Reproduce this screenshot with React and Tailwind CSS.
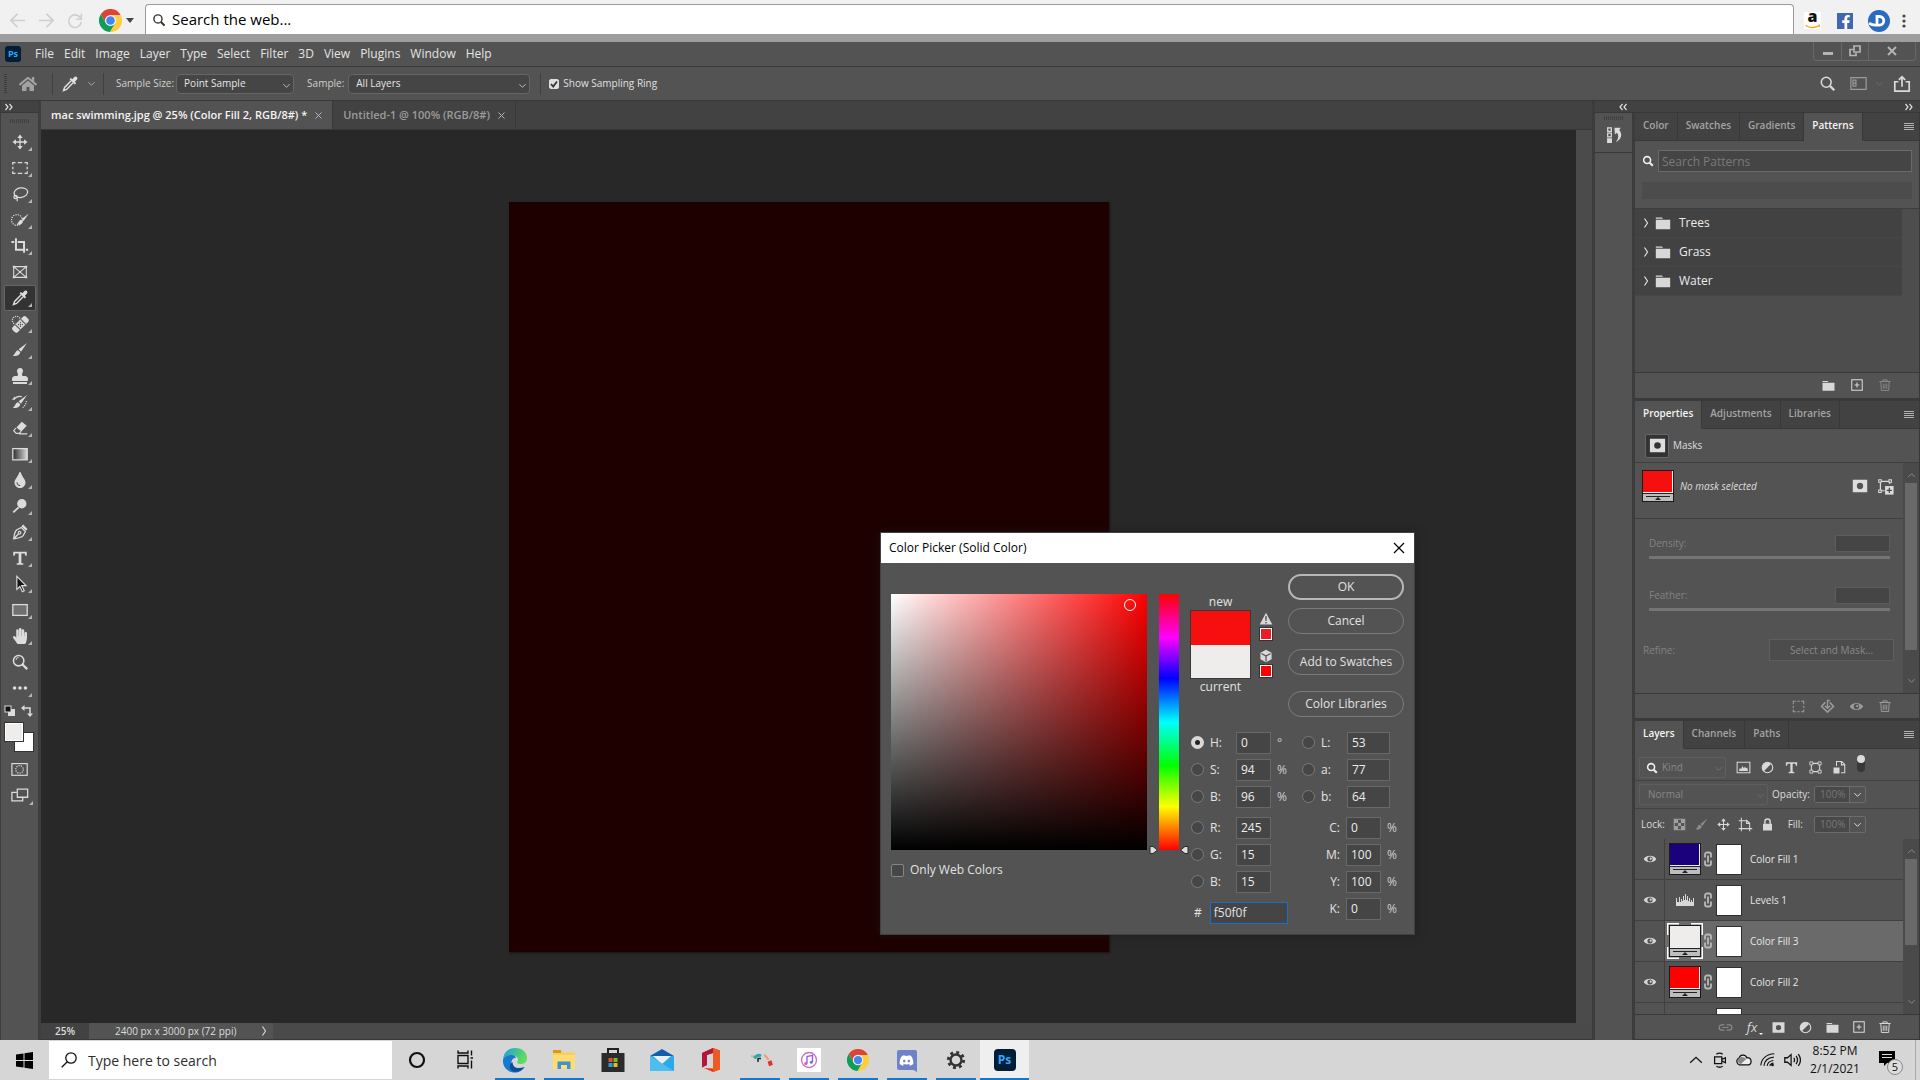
import React from "react";
import { FaFacebookF, FaDiscord, FaStamp, FaTint, FaHandPaper, FaHome } from "react-icons/fa";

/* ---------- shared icon pieces ---------- */

function Icon({ size = 20, box = 20, children, className = "" }) {
  return (
    <svg
      width={size}
      height={size}
      viewBox={`0 0 ${box} ${box}`}
      fill="none"
      stroke="currentColor"
      strokeWidth="1.4"
      aria-hidden="true"
      className={`block shrink-0 ${className}`}
    >
      {children}
    </svg>
  );
}

const solid = { fill: "currentColor", stroke: "none" };

function Chevron({ size = 10, dir = "down", className = "" }) {
  const d = {
    down: "M1.5 3.5L5 7l3.5-3.5",
    up: "M1.5 6.5L5 3l3.5 3.5",
    right: "M3.5 0.5L6.500 5l-3 4.5",
  }[dir];
  return (
    <Icon size={size} box={10} className={className}>
      <path d={d} strokeWidth="1.1" />
    </Icon>
  );
}

function DoubleArrow({ left }) {
  return (
    <Icon size={8} box={8}>
      <path d={left ? "M3.5 1L1 4l2.500 3M7.500 1L5 4l2.500 3" : "M.5 1L3 4 .5 7M4.500 1L7 4 4.500 7"} strokeWidth="1.2" />
    </Icon>
  );
}

const Eyedropper = () => (
  <>
    <path d="M11.300 6.500L4 13.800l-1.200 3.400 3.400-1.200L13.500 8.700" strokeWidth="1.600" />
    <path d="M9.500 4.600l1.500-1.400 1.600 1.400 2-2.200c2-1.900 4.900.8 3 3l-2.200 2 1.400 1.700-1.400 1.400z" {...solid} />
  </>
);
const Brush = () => (
  <path d="M17.800 2.300L8.500 9.200l2.600 2.700zM7.800 10.200c-2.800.3-2.800 3.900-5.800 6.300 4.200.8 8-.6 8.300-3.900z" {...solid} />
);
const Mover = () => (
  <>
    <path d="M10 4v12M4 10h12" />
    <path d="M10 1.700L13 5.500H7zM10 18.300l3-3.800H7zM1.700 10l3.800-3v6zM18.300 10l-3.800-3v6z" {...solid} />
  </>
);
const Magnifier = ({ w = 1.6 }) => (
  <>
    <circle cx="8.500" cy="8.500" r="5.800" strokeWidth={w} />
    <path d="M12.800 12.800L18 18" strokeWidth={w + 0.9} />
  </>
);
const FolderShape = () => <path d="M2 4h7l1 1.300H2zM2 6.300h16v10.700H2z" {...solid} />;
const PlusBox = () => (
  <>
    <rect x="2.500" y="2.500" width="15" height="15" strokeWidth="1.500" />
    <path d="M10 6.500v7M6.500 10h7" strokeWidth="1.500" />
  </>
);
const Trash = () => (
  <>
    <path d="M2 5h16M7 5V2.700h6V5M4 5.500l.8 12.300h10.400L16 5.500" />
    <path d="M7.500 8v7.500M10 8v7.500M12.500 8v7.500" strokeWidth="1.300" />
  </>
);
const MaskShape = () => (
  <path d="M2 3h16v14H2zM10 6.500a3.500 3.500 0 1 0 0 7 3.500 3.500 0 0 0 0-7z" fillRule="evenodd" {...solid} />
);
const Eye = () => (
  <path
    d="M1 10c3.500-6.300 14.500-6.300 18 0-3.500 6.300-14.500 6.300-18 0zM10 6.300a3.700 3.700 0 1 0 0 7.400 3.700 3.700 0 0 0 0-7.400zM11 8a1.500 1.500 0 1 1 0 3 1.500 1.500 0 0 1 0-3z"
    fillRule="evenodd"
    {...solid}
  />
);
const HalfCircle = () => (
  <>
    <circle cx="10" cy="10" r="7" strokeWidth="1.500" />
    <path d="M15 5A7 7 0 0 0 5 15z" {...solid} />
  </>
);
const Nodes = () => (
  <>
    <path d="M4.500 4.500h11v11h-11z" />
    <path d="M2.500 2.500h4v4h-4zM13.500 2.500h4v4h-4zM2.500 13.500h4v4h-4zM13.500 13.500h4v4h-4z" fill="#535353" strokeWidth="1.200" />
  </>
);
const TypeShape = () => (
  <path d="M2.500 3h15v4.500h-1.600L15.200 5H11.500v10.500l2.200.5v1.500H6.300V16l2.200-.5V5H4.800l-.7 2.500H2.500z" {...solid} />
);

function ChromeLogo({ size }) {
  return (
    <svg width={size} height={size} viewBox="0 0 24 24" aria-hidden="true" className="block shrink-0">
      <path fill="#db4437" d="M1.900 5.500A12 12 0 0 1 22.700 6.500H12A5.500 5.500 0 0 0 7.240 14.750z" />
      <path fill="#ffcd40" d="M22.700 6.500A12 12 0 0 1 11.400 24l5.360-9.250A5.500 5.500 0 0 0 12 6.500z" />
      <path fill="#0f9d58" d="M11.400 24A12 12 0 0 1 1.900 5.500l5.340 9.250a5.500 5.500 0 0 0 9.520 0z" />
      <circle cx="12" cy="12" r="5.600" fill="#f1f1f1" />
      <circle cx="12" cy="12" r="4.500" fill="#4285f4" />
    </svg>
  );
}

/* ---------- browser strip ---------- */

function BrowserBar() {
  return (
    <header className="flex shrink-0 items-end border-b-8 border-[#9e9e9e] bg-[#f1f1f1] pt-1">
      <div className="flex h-[30px] w-[145px] items-center gap-[10px] pt-[3px] pl-2 text-[#cfcfcf]">
        <button aria-label="Back"><Icon size={19}><path d="M18 10H3M10 3l-7 7 7 7" strokeWidth="1.800" /></Icon></button>
        <button aria-label="Forward"><Icon size={19}><path d="M2 10h15M10 3l7 7-7 7" strokeWidth="1.800" /></Icon></button>
        <button aria-label="Reload"><Icon size={18}><path d="M16 6.500A7 7 0 1 0 17 11M17 2v6h-6" strokeWidth="1.800" /></Icon></button>
        <button aria-label="Browser" className="ml-[5px] flex items-center gap-1">
          <ChromeLogo size={23} />
          <svg width="8" height="5" viewBox="0 0 8 5" aria-hidden="true"><path d="M0 0h8L4 5z" fill="#444" /></svg>
        </button>
      </div>
      <label className="flex h-[30px] flex-1 items-center gap-[6px] rounded-t-sm border border-b-0 border-[#9a9a9a] bg-white px-[6px]">
        <Icon size={14} className="text-[#333]"><Magnifier w={2} /></Icon>
        <input aria-label="Search the web" placeholder="Search the web..." className="min-w-0 flex-1 bg-transparent text-[15px] text-black outline-none placeholder:text-black" />
      </label>
      <div className="flex h-[30px] w-[126px] items-center pt-[3px] pl-[10px]">
        <button aria-label="Amazon" className="mr-4 flex h-[17px] w-[17px] flex-col items-center bg-white">
          <span className="-mt-1 text-[16px] leading-4 font-extrabold text-[#111]">a</span>
          <svg width="17" height="5" viewBox="0 0 17 5" aria-hidden="true" className="block">
            <path d="M1.500 1.500c4 2.500 9 2.500 13 .2M15.500 .5l-.6 2.500" stroke="#f90" strokeWidth="1.300" fill="none" />
          </svg>
        </button>
        <button aria-label="Facebook" className="mr-[15px] flex size-4 items-end justify-end bg-[#4267b2] text-white">
          <FaFacebookF size={14} />
        </button>
        <button aria-label="Account">
          <svg width="22" height="22" viewBox="0 0 22 22" aria-hidden="true">
            <circle cx="11" cy="11" r="11" fill="#2a6ac0" />
            <path d="M9 14V6.500h2.500a4.300 4.300 0 0 1 0 8.600H7.500c-3 0-4.500-.6-6.500-2" fill="none" stroke="#fff" strokeWidth="2.800" />
          </svg>
        </button>
        <button aria-label="More" className="ml-3">
          <svg width="4" height="14" viewBox="0 0 4 14" fill="#444" aria-hidden="true"><circle cx="2" cy="2" r="1.600" /><circle cx="2" cy="7" r="1.600" /><circle cx="2" cy="12" r="1.600" /></svg>
        </button>
      </div>
    </header>
  );
}

/* ---------- menu and options ---------- */

function PsLogo({ className }) {
  return <span className={`flex items-center justify-center bg-[#001e36] font-bold text-[#31a8ff] ${className}`}>Ps</span>;
}

const MENUS = ["File", "Edit", "Image", "Layer", "Type", "Select", "Filter", "3D", "View", "Plugins", "Window", "Help"];

function MenuBar() {
  return (
    <nav className="flex h-[25px] shrink-0 items-center border-b border-[#383838] pl-[5px] text-[12px]">
      <PsLogo className="mr-[9px] size-4 rounded-[3px] text-[9px]" />
      {MENUS.map((m) => (
        <button key={m} className="px-[5px]">{m}</button>
      ))}
      <div className="mr-1 ml-auto flex h-[19px] self-start rounded-b-sm border border-t-0 border-[#686868] text-[#b4b4b4]">
        <button aria-label="Minimize" className="flex w-7 items-center justify-center border-r border-[#686868]">
          <span className="mt-1 h-[3px] w-[10px] bg-[#b4b4b4]" />
        </button>
        <button aria-label="Restore" className="flex w-[27px] items-center justify-center border-r border-[#686868]">
          <Icon size={12} box={12}><path d="M5 1h6v6H5zM4 4.500H1v6h6V8" strokeWidth="1.700" /></Icon>
        </button>
        <button aria-label="Close" className="flex w-[46px] items-center justify-center">
          <Icon size={10} box={10}><path d="M1 1l8 8M9 1L1 9" strokeWidth="2" /></Icon>
        </button>
      </div>
    </nav>
  );
}

function OptionSelect({ id, value, className }) {
  return (
    <span className={`relative flex ${className}`}>
      <select id={id} defaultValue={value} className="h-5 w-full appearance-none rounded-sm border border-[#666] bg-[#454545] pr-5 pl-[7px] text-[10px] text-[#e6e6e6]">
        <option>{value}</option>
      </select>
      <Chevron size={9} className="pointer-events-none absolute top-[7px] right-[3px] text-[#bbb]" />
    </span>
  );
}

function OptionsBar() {
  return (
    <div className="flex h-[34px] shrink-0 items-center border-b border-[#383838] text-[10px] text-[#d0d0d0]">
      <span className="ml-1 h-5 w-[3px] bg-[repeating-linear-gradient(#3c3c3c_0_1px,transparent_1px_2px)]" />
      <button aria-label="Home" className="ml-3 text-[#a2a2a2]"><FaHome size={18} /></button>
      <span className="mr-2 ml-[15px] h-[22px] w-px bg-[#404040]" />
      <button aria-label="Eyedropper tool" className="flex items-center gap-2 text-[#e0e0e0]">
        <Icon size={18}><Eyedropper /></Icon>
        <Chevron size={9} className="text-[#aaa]" />
      </button>
      <span className="mr-3 ml-[7px] h-[22px] w-px bg-[#404040]" />
      <label htmlFor="sample-size" className="mr-[2px] whitespace-nowrap">Sample Size:</label>
      <OptionSelect id="sample-size" value="Point Sample" className="w-[118px]" />
      <label htmlFor="sample-layers" className="mr-1 ml-[13px] whitespace-nowrap">Sample:</label>
      <OptionSelect id="sample-layers" value="All Layers" className="w-[182px]" />
      <span className="mr-2 ml-[10px] h-[22px] w-px bg-[#404040]" />
      <label className="flex items-center gap-1 text-[#e0e0e0]">
        <CheckInput defaultChecked className="size-[10px]" />
        Show Sampling Ring
      </label>
      <div className="ml-auto flex items-center pr-[9px] text-[#dadada]">
        <button aria-label="Search"><Icon size={17}><Magnifier w={1.8} /></Icon></button>
        <button aria-label="Workspace" className="ml-[14px] flex items-center gap-2 text-[#9a9a9a]">
          <Icon size={17}><path d="M1 3h18v14H1z" /><path d="M3.500 6h3.500v7H3.500zM3.500 9.500H7" /></Icon>
          <Chevron size={9} className="text-[#6a6a6a]" />
        </button>
        <button aria-label="Share" className="ml-[9px]"><Icon size={18}><path d="M6 7.500H2V18h16V7.500h-4M10 13V3M6.500 5.500L10 2l3.500 3.500" strokeWidth="1.900" /></Icon></button>
      </div>
    </div>
  );
}

function CheckInput({ className = "", ...props }) {
  return (
    <span className={`relative flex ${className}`}>
      <input type="checkbox" {...props} className="peer size-full appearance-none rounded-xs border border-[#858585] bg-[#464646] checked:border-[#dedede] checked:bg-[#dedede]" />
      <svg viewBox="0 0 10 10" className="pointer-events-none absolute inset-0 hidden peer-checked:block" aria-hidden="true">
        <path d="M2 5l2.200 2.500L8 2.500" fill="none" stroke="#333" strokeWidth="1.800" />
      </svg>
    </span>
  );
}

/* ---------- tools ---------- */

const TOOLS = [
  ["Move", <Mover />],
  ["Marquee", <path d="M2 6.500V4h3M7.500 4h5M15 4h3v2.500M18 8.500v3M18 13.500V16h-3M12.500 16h-5M5 16H2v-2.500M2 11.500v-3" />],
  ["Lasso", <><ellipse cx="11" cy="8.500" rx="7.600" ry="5.300" transform="rotate(-10 11 8.500)" /><circle cx="5" cy="13.200" r="1.800" /><path d="M6.500 14.500c.8 1.200.8 2.200.2 3.500" /></>],
  ["Quick selection", <><circle cx="6.500" cy="10" r="6" strokeDasharray="1.300 1.300" /><g transform="translate(4.500 1) scale(.85)"><Brush /></g></>],
  ["Crop", <path d="M5.500 1.500v12.700h9M.5 5.500h3M7.500 5.500H14.500v12M16.500 14.200h2.500" strokeWidth="2.200" />],
  ["Frame", <><path d="M3 4h14v12H3zM3 4l14 12M17 4L3 16" strokeWidth="1.200" /><path d="M2 3h2v2H2zM16 3h2v2h-2zM2 15h2v2H2zM16 15h2v2h-2z" {...solid} /></>],
  ["Eyedropper", <Eyedropper />],
  ["Healing brush", <><circle cx="6" cy="6" r="4.500" strokeDasharray="1.200 1.200" /><g transform="rotate(-45 10.500 10.500)"><rect x="0" y="6.500" width="21" height="8" rx="2.500" {...solid} /><path d="M6.300 6.500v8M14.700 6.500v8" stroke="#535353" strokeWidth="1.200" /><path d="M9 9h.1M12 9h.1M9 12h.1M12 12h.1M10.500 10.500h.1" stroke="#535353" strokeWidth="1.500" strokeLinecap="round" /></g></>],
  ["Brush", <Brush />],
  ["Clone stamp", null, FaStamp],
  ["History brush", <><Brush /><path d="M4 6c3-2.500 6-2.500 8-2" /><path d="M1 7.500l3.500-4v4z" {...solid} /><path d="M17 9c0 3-2 6-4.500 7.500" strokeDasharray="1.200 1.200" /></>],
  ["Eraser", <><path d="M12 3l5.500 4.500-6 6.500L6 9.500z" {...solid} /><path d="M5.500 10L3 13l2.800 3h3.400l2-2.200M9 16.500h9" strokeWidth="1.300" /></>],
  ["Gradient", <><defs><linearGradient id="tool-gradient"><stop stopColor="#2c2c2c" /><stop offset="1" stopColor="#d8d8d8" /></linearGradient></defs><rect x="2" y="4" width="16" height="12.500" fill="url(#tool-gradient)" /></>],
  ["Blur", null, FaTint],
  ["Dodge", <><circle cx="12" cy="7.500" r="5.200" {...solid} /><path d="M8.500 11.500L2.500 17" strokeWidth="2" /></>],
  ["Pen", <><path d="M3 17.500c.5-4.500 1-8 3.500-10l5-2.500 4.500 4.500-2.500 4.500c-2 2.500-6 3-10.500 3.500zM3.500 17l5-5" /><circle cx="9.500" cy="10.800" r="1.500" strokeWidth="1.200" /><path d="M11.500 3.500l2-1.700 4.800 4.800-1.700 2z" {...solid} /></>],
  ["Type", <TypeShape />],
  ["Path selection", <path d="M6.500 1.500v14.500l3.300-3.200 2.900 5.700 2-1-2.800-5.700h4.800z" fill="#151515" strokeWidth="1.300" />],
  ["Rectangle", <rect x="2" y="4" width="16" height="12" fill="#707070" />],
  ["Hand", null, FaHandPaper],
  ["Zoom", <><Magnifier w={1.7} /><path d="M5.500 8a3 3 0 0 1 3-3" strokeWidth="1" /></>],
  ["More tools", <path d="M2 10a2 2 0 1 0 4 0 2 2 0 1 0-4 0M8 10a2 2 0 1 0 4 0 2 2 0 1 0-4 0M14 10a2 2 0 1 0 4 0 2 2 0 1 0-4 0" {...solid} />],
];
const NO_FLYOUT = ["Frame", "Zoom"];

function Flyout() {
  return (
    <svg width="4" height="4" viewBox="0 0 4 4" className="absolute right-[3px] bottom-[3px]" aria-hidden="true"><path d="M4 0v4H0z" fill="#b5b5b5" /></svg>
  );
}

function Toolbar() {
  return (
    <aside className="flex w-[41px] shrink-0 flex-col border-r-3 border-l border-[#3e3e3e]">
      <div className="flex h-3 items-center border-b border-[#383838] bg-[#424242] pl-1 text-[#ddd]"><DoubleArrow /></div>
      <div className="flex h-4 items-center justify-center"><span className="h-1 w-5 bg-[repeating-linear-gradient(90deg,#404040_0_1px,transparent_1px_2px)]" /></div>
      <div className="flex flex-col pl-[3px] text-[#dcdcdc]">
        {TOOLS.map(([name, art, Pack]) => (
          <button
            key={name}
            aria-label={name}
            className={`relative flex h-[26px] w-8 items-center justify-center rounded-xs border ${name === "Eyedropper" ? "border-[#666] bg-[#333]" : "border-transparent"}`}
          >
            {Pack ? <Pack size={16} /> : <Icon size={18}>{art}</Icon>}
            {!NO_FLYOUT.includes(name) && <Flyout />}
          </button>
        ))}
        <div className="flex h-5 items-center justify-between pr-[5px]">
          <button aria-label="Default colors"><Icon size={12} box={12}><path d="M4 4h7v7H4z" {...solid} /><rect x="1" y="1" width="6" height="6" fill="#111" strokeWidth="1" /></Icon></button>
          <button aria-label="Swap colors"><Icon size={12} box={12}><path d="M3 3h6v6" strokeWidth="1.500" /><path d="M0 3l3.500-3v6zM9 12L6 8.500h6z" {...solid} /></Icon></button>
        </div>
        <div className="relative mt-px h-[30px] w-[30px]">
          <button aria-label="Background color" className="absolute right-0 bottom-0 size-5 border border-[#333] bg-white" />
          <button aria-label="Foreground color" className="absolute top-0 left-0 size-5 border border-[#333] bg-[#efecec] outline-1 -outline-offset-2 outline-white" />
        </div>
        <button aria-label="Quick mask" className="mt-1 flex h-[26px] w-8 items-center justify-center">
          <Icon size={18}><rect x="1" y="4" width="17" height="13" strokeWidth="1.300" /><circle cx="9.500" cy="10.500" r="4.200" strokeDasharray="1.300 1.300" /></Icon>
        </button>
        <button aria-label="Screen mode" className="relative flex h-[26px] w-8 items-center justify-center">
          <Icon size={18}><path d="M7 3.500h11.500v9H7z" /><path d="M6.500 7H1v9.500h12v-3.500" /></Icon>
          <Flyout />
        </button>
      </div>
    </aside>
  );
}

/* ---------- document area ---------- */

function DocTab({ active, children }) {
  return (
    <div className={`flex items-center gap-2 border-r border-[#383838] px-[10px] text-[11px] font-semibold ${active ? "bg-[#535353] text-[#f4f4f4]" : "text-[#9c9c9c]"}`}>
      <button className="whitespace-nowrap">{children}</button>
      <button aria-label="Close tab" className="text-[#b5b5b5]"><Icon size={7} box={7}><path d="M.5.5l6 6M6.500.5l-6 6" strokeWidth="1" /></Icon></button>
    </div>
  );
}

function Workspace() {
  return (
    <main className="flex min-w-0 flex-1 flex-col">
      <div className="flex h-[29px] shrink-0 border-b border-[#383838] bg-[#424242]">
        <DocTab active>mac swimming.jpg @ 25% (Color Fill 2, RGB/8#) *</DocTab>
        <DocTab>Untitled-1 @ 100% (RGB/8#)</DocTab>
      </div>
      <div className="flex min-h-0 flex-1">
        <div className="flex min-w-0 flex-1 items-center justify-center bg-[#282828]">
          <div className="h-[750px] w-[600px] bg-[#1e0000] shadow-[1px_1px_2px_#151515]" />
        </div>
        <div className="w-4 bg-[#4b4b4b]" />
      </div>
      <div className="flex h-[17px] shrink-0 items-center border-b border-[#383838] bg-[#4a4a4a] text-[10px] text-[#dcdcdc]">
        <span className="flex h-full w-12 items-center bg-[#424242] pl-[14px] font-semibold">25%</span>
        <button className="flex h-full w-[184px] items-center justify-between bg-[#535353] pr-1 pl-[26px]">
          2400 px x 3000 px (72 ppi)<Chevron size={10} dir="right" />
        </button>
      </div>
    </main>
  );
}

/* ---------- panels ---------- */

function PanelTabs({ tabs, active }) {
  return (
    <div className="flex h-7 shrink-0 items-stretch bg-[#424242] text-[10px] font-semibold">
      {tabs.map((t) => (
        <button
          key={t}
          className={`border-r border-b border-r-[#383838] px-2 pb-[2px] ${t === active ? "border-b-transparent bg-[#535353] text-[#f4f4f4]" : "border-b-[#383838] text-[#a4a4a4]"}`}
        >
          {t}
        </button>
      ))}
      <div className="flex flex-1 items-center justify-end border-b border-[#383838] pr-[5px] text-[#b0b0b0]">
        <button aria-label={`${active} panel menu`}><Icon size={10} box={10}><path d="M0 1.500h10M0 3.500h10M0 5.500h10M0 7.500h10" strokeWidth="1" shapeRendering="crispEdges" /></Icon></button>
      </div>
    </div>
  );
}

function IconButton({ label, size = 15, className = "", children }) {
  return (
    <button aria-label={label} className={`relative ${className}`}>
      <Icon size={size}>{children}</Icon>
    </button>
  );
}

function PatternsPanel() {
  return (
    <section className="flex shrink-0 flex-col border-b-3 border-[#3a3a3a]">
      <PanelTabs tabs={["Color", "Swatches", "Gradients", "Patterns"]} active="Patterns" />
      <div className="flex flex-col gap-[10px] border-b border-[#3e3e3e] px-[7px] py-[9px]">
        <label className="flex items-center gap-1 text-[#eee]">
          <Icon size={12}><Magnifier w={2.6} /></Icon>
          <input placeholder="Search Patterns" aria-label="Search patterns" className="h-[22px] min-w-0 flex-1 border border-[#6a6a6a] bg-[#454545] px-[3px] text-[12px] outline-none placeholder:text-[#7a7a7a]" />
        </label>
        <div className="h-[17px] bg-[#4c4c4c]" />
      </div>
      <div className="h-[163px] bg-[#4d4d4d] pr-[17px] text-[12px] text-[#ececec]">
        {["Trees", "Grass", "Water"].map((n) => (
          <button key={n} className="flex h-[29px] w-full items-center border-b border-[#474747] bg-[#424242] pl-[6px]">
            <Chevron size={10} dir="right" />
            <Icon size={18} className="mx-[3px] text-[#d8d8d8]"><FolderShape /></Icon>
            <span className="pl-1">{n}</span>
          </button>
        ))}
      </div>
      <div className="flex h-[26px] items-center justify-end gap-[14px] border-t border-[#383838] pr-[27px] pb-px text-[#d8d8d8]">
        <IconButton label="New group"><FolderShape /></IconButton>
        <IconButton label="New pattern" size={14}><PlusBox /></IconButton>
        <IconButton label="Delete pattern" size={14} className="text-[#888]"><Trash /></IconButton>
      </div>
    </section>
  );
}

function ScrollBar({ thumb }) {
  return (
    <div className="flex w-4 shrink-0 flex-col items-center bg-[#4a4a4a] py-1 text-[#8a8a8a]">
      <Chevron size={9} dir="up" className="mt-1 mb-[3px]" />
      <div className={`w-3 bg-[#696969] ${thumb}`} />
      <Chevron size={9} className="mt-auto mb-1" />
    </div>
  );
}

function FillThumb({ color }) {
  return (
    <span className="flex size-8 shrink-0 flex-col border border-[#1a1a1a] bg-[#bdbdbd]">
      <span className={`h-[22px] border-r border-b border-[#eee] ${color}`} />
      <svg viewBox="0 0 30 8" width="30" height="8" aria-hidden="true"><path d="M0 .5h30M3 3.500h24" stroke="#222" strokeWidth="1" /><path d="M15 4l3 3h-6z" fill="#222" /></svg>
    </span>
  );
}

function MaskSlider({ id, label }) {
  return (
    <div className="flex flex-col gap-1">
      <div className="flex items-center justify-between">
        <label htmlFor={id} className="text-[#828282]">{label}</label>
        <input disabled aria-label={`${label} value`} className="h-[17px] w-[55px] border border-[#5c5c5c] bg-[#454545]" />
      </div>
      <input id={id} type="range" disabled className="h-[3px] appearance-none bg-[#757575] [&::-webkit-slider-thumb]:size-0 [&::-webkit-slider-thumb]:appearance-none" />
    </div>
  );
}

function PropertiesPanel() {
  return (
    <section className="flex shrink-0 flex-col border-b-3 border-[#3a3a3a]">
      <PanelTabs tabs={["Properties", "Adjustments", "Libraries"]} active="Properties" />
      <div className="flex h-[34px] items-center gap-1 border-b border-[#3e3e3e] pl-[10px] text-[10px] text-[#ddd]">
        <button aria-label="Masks" className="flex size-6 items-center justify-center rounded-xs border border-[#666] bg-[#333]">
          <Icon size={19}><MaskShape /></Icon>
        </button>
        Masks
      </div>
      <div className="flex text-[10px]">
        <div className="min-w-0 flex-1">
          <div className="flex h-14 items-start border-b border-[#3e3e3e] pt-[7px] pr-[9px] pl-[7px] text-[#ddd]">
            <FillThumb color="bg-[#f50f0f]" />
            <span className="mt-[9px] ml-[6px] italic">No mask selected</span>
            <IconButton label="Add pixel mask" size={18} className="mt-[7px] mr-2 ml-auto"><MaskShape /></IconButton>
            <IconButton label="Add vector mask" size={17} className="mt-2">
              <path d="M15 7V4M4 4v11h5M4 4h11" /><path d="M2 2h3v3H2zM14 2h3v3h-3zM2 14h3v3H2z" strokeWidth="1.200" fill="#535353" />
              <path d="M9.500 9.500h10v10h-10z" {...solid} /><path d="M14.500 11.500v6M11.500 14.500h6" stroke="#444" />
            </IconButton>
          </div>
          <div className="flex h-[174px] flex-col gap-7 pt-4 pr-[13px] pl-[14px]">
            <MaskSlider id="density" label="Density:" />
            <MaskSlider id="feather" label="Feather:" />
            <div className="-mr-1 -ml-[6px] flex items-center justify-between">
              <span className="text-[#828282]">Refine:</span>
              <button disabled className="h-[22px] w-[125px] border border-[#5e5e5e] bg-[#4c4c4c] text-[#8a8a8a]">Select and Mask...</button>
            </div>
          </div>
        </div>
        <ScrollBar thumb="h-[167px]" />
      </div>
      <div className="flex h-[25px] items-center justify-end gap-[14px] border-t border-[#383838] pr-[27px] text-[#9c9c9c]">
        <IconButton label="Load selection"><path d="M3 7V3h3.500M8.500 3h3M13.500 3H17v4M17 9v3M17 14v3h-3.500M11.500 17h-3M6.500 17H3v-3M3 12V9" /></IconButton>
        <IconButton label="Apply mask"><path d="M7 4.500L2 10l8 7.500L18 10l-5-5.500" strokeWidth="2" /><path d="M13 2h-3v10M6.500 9L10 12.500 13.500 9" strokeWidth="1.800" /></IconButton>
        <IconButton label="Toggle mask"><Eye /></IconButton>
        <IconButton label="Delete mask" size={14}><Trash /></IconButton>
      </div>
    </section>
  );
}

const LAYERS = [
  { name: "Color Fill 1", color: "bg-[#1b027c]" },
  { name: "Levels 1" },
  { name: "Color Fill 3", color: "bg-[#efecec]", selected: true },
  { name: "Color Fill 2", color: "bg-[#fe0000]" },
];

function LinkIcon() {
  return (
    <svg width="10" height="16" viewBox="0 0 10 16" fill="none" stroke="#b8b8b8" strokeWidth="1.800" aria-hidden="true">
      <path d="M2 6.500V3.500a2 2 0 0 1 2-2h2a2 2 0 0 1 2 2v3M2 9.500v3a2 2 0 0 0 2 2h2a2 2 0 0 0 2-2v-3M5 4.500v7" />
    </svg>
  );
}

function LayerRow({ name, color, selected }) {
  return (
    <li className="flex h-[41px] border-b border-[#404040]">
      <button aria-label={`Toggle ${name}`} className="flex w-[30px] items-center justify-center border-r border-[#404040] text-[#d8d8d8]"><Icon size={14}><Eye /></Icon></button>
      <div className={`flex min-w-0 flex-1 items-center pl-1 ${selected ? "bg-[#6a6a6a]" : ""}`}>
        <span className="relative flex w-8 justify-center">
          {color ? <FillThumb color={color} /> : (
            <svg width="18" height="12" viewBox="0 0 18 12" fill="#d8d8d8" aria-hidden="true"><path d="M0 12V4h1v4h2V3h1v5h1V5h1v2h1V2h1v4h1V0h1v6h1V2h1v5h1V4h1v4h1V6h1v2h1V4h1v8z" /></svg>
          )}
          {selected && (
            <svg width="36" height="36" viewBox="0 0 36 36" className="absolute -top-[2px] -left-[2px]" fill="none" stroke="#fff" strokeWidth="1.500" aria-hidden="true"><path d="M.7 12V.7H12M24 .7h11.300V12M35.300 24v11.300H24M12 35.300H.7V24" /></svg>
          )}
        </span>
        <span className="mx-[2px]"><LinkIcon /></span>
        <span className="ml-px h-[31px] w-[26px] border border-[#303030] bg-white" />
        <span className="pl-2 text-[10px] text-[#e6e6e6]">{name}</span>
      </div>
    </li>
  );
}

function PercentField({ id, label }) {
  return (
    <>
      <label htmlFor={id} className="mr-1 ml-auto text-[#dcdcdc]">{label}</label>
      <span className="mr-[53px] flex h-[17px] rounded-xs border border-[#6c6c6c]">
        <input id={id} disabled defaultValue="100%" className="w-[35px] border-r border-[#6c6c6c] bg-[#484848] pl-[5px] text-[#777]" />
        <button aria-label={`${label} slider`} className="flex w-[15px] items-center justify-center text-[#ddd]"><Chevron size={9} /></button>
      </span>
    </>
  );
}

function LayersPanel() {
  return (
    <section className="flex min-h-0 flex-1 flex-col text-[10px]">
      <PanelTabs tabs={["Layers", "Channels", "Paths"]} active="Layers" />
      <div className="flex h-8 shrink-0 items-end gap-[10px] border-b border-[#424242] pb-[2px] pl-1">
        <span className="relative flex w-[87px]">
          <select disabled aria-label="Filter kind" className="h-[21px] w-full appearance-none rounded-xs border border-[#5e5e5e] pl-[22px] text-[#888] opacity-100"><option>Kind</option></select>
          <Icon size={12} className="absolute top-[5px] left-[7px] text-[#eee]"><Magnifier w={2.6} /></Icon>
          <Chevron size={9} className="absolute top-[7px] right-[3px] text-[#707070]" />
        </span>
        <div className="flex h-[21px] items-center gap-[9px] text-[#d8d8d8]">
          <IconButton label="Pixel layers"><path d="M1.500 3h17v14h-17z" /><path d="M4 14.500l1-4 2 1.500 1.500-4 2 3 1.500-2 1.500 2 1.500-1 1 4.500z" {...solid} /></IconButton>
          <IconButton label="Adjustment layers"><HalfCircle /></IconButton>
          <IconButton label="Type layers"><TypeShape /></IconButton>
          <IconButton label="Shape layers"><Nodes /></IconButton>
          <IconButton label="Smart objects"><path d="M6 8V2h7l4 4v11h-5M12.500 2v4.500H17" /><path d="M2 10h8v8H2z" {...solid} /></IconButton>
        </div>
        <button aria-label="Filter toggle" className="flex h-[17px] w-2 items-start self-center rounded-full bg-[#383838]"><span className="size-2 rounded-full bg-[#dcdcdc]" /></button>
      </div>
      <div className="flex h-7 shrink-0 items-center border-b border-[#424242] pl-1">
        <span className="relative flex w-[129px]">
          <select disabled aria-label="Blend mode" className="h-[21px] w-full appearance-none rounded-xs border border-[#5e5e5e] pl-2 text-[#888] opacity-100"><option>Normal</option></select>
          <Chevron size={9} className="absolute top-[7px] right-[3px] text-[#6a6a6a]" />
        </span>
        <PercentField id="opacity" label="Opacity:" />
      </div>
      <div className="flex h-[30px] shrink-0 items-center gap-[7px] pl-[6px] text-[#d8d8d8]">
        <span>Lock:</span>
        <IconButton label="Lock transparency" className="text-[#a0a0a0]"><path d="M3 3h14v14H3z" /><path d="M3 3h5v5H3zM12 3h5v5h-5zM8 8h4v4H8zM3 12h5v5H3zM12 12h5v5h-5z" {...solid} /></IconButton>
        <IconButton label="Lock pixels" className="text-[#8c8c8c]"><Brush /></IconButton>
        <IconButton label="Lock position"><Mover /></IconButton>
        <IconButton label="Lock artboard"><path d="M4.500 1v18M1 5h11M1 15.500h18M15.500 19V8l-4-3.500v4h4" /></IconButton>
        <IconButton label="Lock all"><path d="M4 9h12v9H4z" {...solid} /><path d="M6.500 9V6a3.500 3.500 0 0 1 7 0v3" strokeWidth="2" /></IconButton>
        <PercentField id="fill" label="Fill:" />
      </div>
      <div className="flex min-h-0 flex-1 overflow-hidden">
        <ul className="min-w-0 flex-1 overflow-hidden">
          {LAYERS.map((l) => <LayerRow key={l.name} {...l} />)}
          <li className="flex h-[41px] items-start">
            <span className="h-full w-[30px] border-r border-[#404040]" />
            <span className="mt-[5px] ml-[51px] h-[31px] w-[26px] border border-[#303030] bg-white" />
          </li>
        </ul>
        <ScrollBar thumb="h-[86px]" />
      </div>
      <div className="flex h-[26px] shrink-0 items-center justify-end gap-3 border-t border-b border-[#383838] pr-[27px] text-[#d8d8d8]">
        <IconButton label="Link layers" className="text-[#888]"><path d="M8.500 6.500H5a3.500 3.500 0 0 0 0 7h3.500M11.500 6.500H15a3.500 3.500 0 0 1 0 7h-3.500M6 10h8" strokeWidth="1.600" /></IconButton>
        <button aria-label="Layer style" className="relative w-[14px] text-[13px] leading-4 italic">fx<span className="absolute -right-1 bottom-0 border-x-2 border-t-2 border-x-transparent border-t-white" /></button>
        <IconButton label="Add mask"><MaskShape /></IconButton>
        <IconButton label="New adjustment layer"><HalfCircle /></IconButton>
        <IconButton label="New group"><FolderShape /></IconButton>
        <IconButton label="New layer" size={14}><PlusBox /></IconButton>
        <IconButton label="Delete layer" size={14}><Trash /></IconButton>
      </div>
    </section>
  );
}

function RightDock() {
  return (
    <div className="flex w-[328px] shrink-0 flex-col border-l-3 border-[#3c3c3c]">
      <div className="flex h-3 shrink-0 items-center border-b border-[#383838] bg-[#424242] text-[#ddd]">
        <button aria-label="Expand icons" className="ml-6"><DoubleArrow left /></button>
        <button aria-label="Collapse panels" className="mr-[7px] ml-auto"><DoubleArrow /></button>
      </div>
      <div className="flex min-h-0 flex-1">
        <div className="flex w-10 shrink-0 flex-col border-r-3 border-[#3c3c3c]">
          <div className="flex h-10 flex-col items-center gap-[6px] border-b border-[#383838] pt-[3px] text-[#dcdcdc]">
            <span className="h-1 w-5 shrink-0 bg-[repeating-linear-gradient(90deg,#404040_0_1px,transparent_1px_2px)]" />
            <IconButton label="History" size={18}><path d="M3 2h4v4H3zM3 8h4v4H3z" /><path d="M2.300 13.500h5.400v5.400H2.300zM10.500 2H17.500L15.800 4.500c4 4.500 2.500 10.500-3.800 13.500 3.200-4 3.500-8 1.200-10.500L11 9.500z" {...solid} /></IconButton>
          </div>
        </div>
        <div className="flex min-w-0 flex-1 flex-col border-r border-[#383838]">
          <PatternsPanel />
          <PropertiesPanel />
          <LayersPanel />
        </div>
      </div>
    </div>
  );
}

/* ---------- color picker dialog ---------- */

const FIELD = "h-[22px] border border-[#686868] bg-[#454545] px-1 text-[#ececec] outline-none";

function ValueRow({ id, label, value, unit = "", radio, checked, wide }) {
  return (
    <div className={`flex h-[27px] items-center ${radio ? "" : "justify-end"}`}>
      {radio && (
        <input
          type="radio"
          name="channel"
          aria-label={`Use ${id}`}
          defaultChecked={checked}
          className="mr-[6px] size-[13px] shrink-0 appearance-none rounded-full border border-[#7a7a7a] bg-[#464646] checked:border-4 checked:border-[#d8d8d8] checked:bg-[#222]"
        />
      )}
      <label htmlFor={id} className={radio ? "w-[26px]" : "mr-[6px]"}>{label}</label>
      <input id={id} defaultValue={value} className={`${FIELD} ${wide ? "w-[43px]" : "w-[35px]"}`} />
      {!wide && <span className="w-[18px] pl-[6px] leading-4 text-[#cfcfcf]">{unit}</span>}
    </div>
  );
}

function PillButton({ main, className = "", children }) {
  return (
    <button className={`h-[26px] w-full rounded-full ${main ? "border-2 border-[#b8b8b8]" : "border border-[#7c7c7c]"} ${className}`}>{children}</button>
  );
}

function ColorPicker() {
  return (
    <div role="dialog" aria-label="Color Picker (Solid Color)" className="absolute top-[533px] left-[881px] flex w-[533px] flex-col bg-[#535353] pb-2 text-[12px] text-[#e2e2e2] shadow-[0_0_8px_2px_#1c1c1c80] outline-1 outline-[#404040]">
      <div className="flex h-[30px] items-center justify-between bg-white pr-[9px] pl-2 text-black">
        Color Picker (Solid Color)
        <button aria-label="Close dialog"><Icon size={12} box={12}><path d="M1 1l10 10M11 1L1 11" strokeWidth="1.200" /></Icon></button>
      </div>
      <div className="flex items-start px-[10px]">
        <div className="mt-[31px]">
          <div className="flex">
            <div className="relative size-64 bg-[linear-gradient(to_top,#000,transparent),linear-gradient(to_right,#fff,#f00)]">
              <span className="absolute top-[5px] left-[233px] size-3 rounded-full border border-white" />
            </div>
            <div className="relative ml-3 h-64 w-5 bg-[linear-gradient(to_bottom,#f00,#f0f_17%,#00f_33%,#0ff_50%,#0f0_67%,#ff0_83%,#f00)]">
              <input type="range" min="0" max="360" defaultValue="0" aria-label="Hue" className="absolute inset-0 h-full w-full opacity-0 [writing-mode:vertical-lr]" />
              <svg width="40" height="8" viewBox="0 0 40 8" className="pointer-events-none absolute -bottom-1 -left-[10px]" fill="#ddd" stroke="#2a2a2a" strokeWidth="1" aria-hidden="true">
                <path d="M1 .5h3L8.500 4 4 7.500H1zM39 .5h-3L31.500 4 36 7.500h3z" />
              </svg>
            </div>
          </div>
          <label className="mt-[11px] flex items-center gap-[6px]">
            <CheckInput className="size-[13px]" />
            Only Web Colors
          </label>
        </div>
        <div className="ml-[11px] min-w-0 flex-1 pt-[11px]">
          <div className="flex items-start justify-between">
            <div className="mt-5 flex w-[61px] flex-col items-center leading-4">
              new
              <span className="flex h-[69px] w-full flex-col border border-[#383838]">
                <span className="flex-1 bg-[#f50f0f]" />
                <span className="flex-1 bg-[#efecec]" />
              </span>
              current
            </div>
            <div className="mt-[38px] -ml-2 flex flex-col items-center text-[#d8d8d8]">
              <Icon size={14}><path d="M10 1l9 17H1zM8.800 6l.4 7h1.600l.4-7zM9 14.300v2h2v-2z" fillRule="evenodd" {...solid} /></Icon>
              <button aria-label="Use printable color" className="mt-px size-[14px] border border-[#333] bg-[#ed1c24] outline-1 -outline-offset-2 outline-white" />
              <Icon size={14} className="mt-2"><path d="M10 1l8 4.500v9L10 19l-8-4.500v-9z" {...solid} /><path d="M3.500 6.500L10 10l6.500-3.500M10 10v8" stroke="#555" strokeWidth="1.800" /></Icon>
              <button aria-label="Use web color" className="mt-px size-[14px] border border-[#333] bg-[#f00] outline-1 -outline-offset-2 outline-white" />
            </div>
            <div className="flex w-[116px] flex-col">
              <PillButton main>OK</PillButton>
              <PillButton className="mt-2">Cancel</PillButton>
              <PillButton className="mt-[15px]">Add to Swatches</PillButton>
              <PillButton className="mt-4">Color Libraries</PillButton>
            </div>
          </div>
          <div className="mt-3 flex items-start justify-between pl-px">
            <div className="flex flex-col">
              <ValueRow id="hue" label="H:" value="0" unit="°" radio checked />
              <ValueRow id="saturation" label="S:" value="94" unit="%" radio />
              <ValueRow id="brightness" label="B:" value="96" unit="%" radio />
              <div className="h-1" />
              <ValueRow id="red" label="R:" value="245" radio />
              <ValueRow id="green" label="G:" value="15" radio />
              <ValueRow id="blue" label="B:" value="15" radio />
              <div className="mt-1 flex h-[27px] items-center gap-2 pl-[3px]">
                <label htmlFor="hex">#</label>
                <input id="hex" defaultValue="f50f0f" className="h-[22px] w-[78px] border border-[#1f6dc4] bg-[#454545] px-[3px] outline-none" />
              </div>
            </div>
            <div className="flex flex-col">
              <div className="flex flex-col pr-[14px]">
                <ValueRow id="lightness" label="L:" value="53" radio wide />
                <ValueRow id="lab-a" label="a:" value="77" radio wide />
                <ValueRow id="lab-b" label="b:" value="64" radio wide />
              </div>
              <div className="h-1" />
              <div className="flex flex-col pr-[5px]">
                <ValueRow id="cyan" label="C:" value="0" unit="%" />
                <ValueRow id="magenta" label="M:" value="100" unit="%" />
                <ValueRow id="yellow" label="Y:" value="100" unit="%" />
                <ValueRow id="black" label="K:" value="0" unit="%" />
              </div>
            </div>
          </div>
        </div>
      </div>
    </div>
  );
}

/* ---------- taskbar ---------- */

const APPS = [
  ["Cortana", <circle cx="14" cy="14" r="7" fill="none" stroke="#111" strokeWidth="2.200" />],
  ["Task view", <path d="M6 9.500h10v8H6zM6 4.500V7h10V4.500M6 22.500V20h10v2.500M19.500 4.500v5M19.500 14.500v8M18.500 12h2.500" fill="none" stroke="#111" strokeWidth="1.400" />],
  ["Edge", <><defs><linearGradient id="edge-a" x1="0" y1="0" x2="1" y2=".3"><stop stopColor="#1b9de2" /><stop offset="1" stopColor="#5fdc5c" /></linearGradient></defs><path d="M2 15C2 7 7 2 14 2c8 0 12 5 12 10 0 4-3 6-6.500 6-3 0-4-1-3-2.500 1.500-2.500 0-5.500-4-5.500-4 0-8 2-10.500 5z" fill="url(#edge-a)" /><path d="M2 14c2-4 6-5.500 9-5 2 .3 3.500 1.500 4 3-6-.5-6.500 9 1 10.500 3 .6 5.500-.2 7.500-1.500C21 25 18 26.500 14 26.500 7 26.500 1.500 21 2 14z" fill="#1579cf" /><path d="M11.500 16c0 5 4.500 7.800 12 5-4 5.500-11 6.500-14 2-1.500-2.500-.5-5.500 2-7z" fill="#0c4d96" /></>, true],
  ["File Explorer", <><path d="M3 4h8l2 2.500h12V23H3z" fill="#f8cf57" /><path d="M3 4h8v3H3z" fill="#d99a18" /><path d="M3 9h22v14H3z" fill="#ffdc72" /><path d="M7.500 23v-7.500h13V23h-3.500v-4h-6v4z" fill="#3f94cf" /></>, true],
  ["Store", <><path d="M9 8V3h10v5" fill="none" stroke="#222" strokeWidth="2" /><path d="M2.500 7h23v19h-23z" fill="#2b2b2b" /><path d="M9.500 12h4v4h-4z" fill="#e2512a" /><path d="M14.500 12h4v4h-4z" fill="#7fb927" /><path d="M9.500 17h4v4h-4z" fill="#19a2e8" /><path d="M14.500 17h4v4h-4z" fill="#f7b71c" /></>],
  ["Mail", <><path d="M2 10l12-7 12 7z" fill="#0f5fae" /><path d="M2 10h24v15H2z" fill="#2ba9ea" /><path d="M5 10h18l-9 8z" fill="#eee" /><path d="M2 10l12 7.500L26 25H2z" fill="#50bdf0" /></>],
  ["Office", <><path d="M5 7l11-5 7 2.500v19L16 26l-9-4 9 .5V7l-6 2v10l-5 2.500z" fill="#df3c12" /><path d="M16 2l7 2.500v19L16 26z" fill="#ec5b26" /><path d="M5 7l11-5v5l-6 2v10l-5 2.500z" fill="#b1173a" /></>],
  ["Monitor", <g fill="none"><path d="M5 10l5 1" stroke="#d7b17c" strokeWidth="2" /><path d="M8.500 12.500c1.500-3 4-4 6.500-2.500" stroke="#20a9bb" strokeWidth="3" /><path d="M12 16v-3.500h3" stroke="#222" strokeWidth="1.500" /><path d="M18 9c2 .8 3.300 2.500 4.500 5" stroke="#ed9a80" strokeWidth="2" /><path d="M23.500 15l1.500 4.500" stroke="#e03030" strokeWidth="4" /></g>, true],
  ["iTunes", <><path d="M2 2h24v24H2z" fill="#fff" /><circle cx="14" cy="14" r="7.500" fill="none" stroke="#c56fd0" strokeWidth="1.300" /><path d="M12 17.500V10.500l5.500-1.200V16" fill="none" stroke="#9d5fe0" strokeWidth="1.400" /><circle cx="10.800" cy="17.500" r="1.500" fill="#e255a1" /><circle cx="16.300" cy="16.300" r="1.500" fill="#4d83ee" /></>, true],
  ["Chrome", "chrome", true],
  ["Discord", "discord", true],
  ["Settings", <><circle cx="14" cy="14" r="5.500" fill="none" stroke="#333" strokeWidth="2.400" /><circle cx="14" cy="14" r="7.700" fill="none" stroke="#333" strokeWidth="2.800" strokeDasharray="2.900 3.147" /></>, true],
  ["Photoshop", "ps", true, true],
];

function AppArt({ art }) {
  if (art === "chrome") return <ChromeLogo size={22} />;
  if (art === "ps") return <PsLogo className="size-[22px] rounded-sm text-[12px]" />;
  if (art === "discord")
    return (
      <span className="relative flex h-5 w-5 items-center justify-center rounded-xs bg-[#6f81c9] text-white">
        <FaDiscord size={15} />
        <svg width="7" height="4" viewBox="0 0 7 4" className="absolute right-0 -bottom-[2px]" aria-hidden="true"><path d="M0 0h7v4z" fill="#6f81c9" /></svg>
      </span>
    );
  return <svg width="28" height="28" viewBox="0 0 28 28" aria-hidden="true">{art}</svg>;
}

function Taskbar() {
  return (
    <footer className="flex h-10 shrink-0 items-stretch bg-[#d6d6d6] text-[#111]">
      <button aria-label="Start" className="flex w-[49px] items-center justify-center">
        <svg width="17" height="17" viewBox="0 0 17 17" aria-hidden="true"><path d="M0 2.400l7.500-1V8H0zM8.500 1.200L17 0v8H8.500zM0 9h7.500v6.600L0 14.600zM8.500 9H17v8l-8.500-1.200z" /></svg>
      </button>
      <label className="my-px flex w-[343px] items-center gap-[11px] bg-white pl-3">
        <Icon size={16} box={16}><circle cx="10" cy="6" r="5.200" strokeWidth="1.300" /><path d="M6.300 9.700L.7 15.300" strokeWidth="1.300" /></Icon>
        <input placeholder="Type here to search" aria-label="Type here to search" className="min-w-0 flex-1 bg-transparent text-[14px] outline-none placeholder:text-[#2e2e2e]" />
      </label>
      {APPS.map(([name, art, open, front]) => (
        <button key={name} aria-label={name} className={`relative flex w-[49px] items-center justify-center ${front ? "bg-[#efefef]" : ""}`}>
          <AppArt art={art} />
          {open && <span className={`absolute bottom-0 h-[2px] bg-[#0f78d1] ${front ? "w-full" : "w-10"}`} />}
        </button>
      ))}
      <div className="ml-auto flex items-center gap-[6px] pr-1">
        <Icon size={18}><path d="M3.500 13L10 7l6.500 6" /></Icon>
        <Icon size={18}><path d="M4 6.500h8v7.500H4zM12 9.500l4-2v5.500l-4-2M6 3.500c2-1.200 5-1.200 7 0M6 17c2 1.200 5 1.200 7 0" /></Icon>
        <Icon size={18}><path d="M5 15.500a4 4 0 0 1-.5-7.500c1-4 7-5 8.500-.5 6-.5 6.500 7.500 1.500 8z" fill="#ededed" /><path d="M2.500 11c1-5 7-6 10-2l-6.500 6z" {...solid} fill="#888" /></Icon>
        <Icon size={18}><path d="M2 16C2.500 9 8 3.500 17 3M5.500 16.500C6 11 10 7.500 16.500 6.800M9 16.500c.5-3 3-5.500 7-6M12 16.500c.3-1.500 1.500-2.500 4-3" strokeWidth="1.200" /><circle cx="15" cy="15.500" r="1.500" {...solid} /></Icon>
        <Icon size={18}><path d="M2 7.500h3L9 4v12l-4-3.500H2zM12 7.500c1 1.500 1 3.500 0 5M14.500 5.500c2 2.700 2 6.300 0 9M17 3.500c3 4 3 9 0 13" /></Icon>
        <time className="flex w-14 flex-col items-center text-[12px] leading-[18px]"><span>8:52 PM</span><span>2/1/2021</span></time>
        <button aria-label="5 notifications" className="relative mr-[6px] ml-[10px] size-6">
          <svg width="24" height="24" viewBox="0 0 24 24" aria-hidden="true"><path d="M0 3h16v12H8l-3 3v-3H0z" /><path d="M3 6.500h10M3 9.500h10" stroke="#ddd" /></svg>
          <span className="absolute right-0 -bottom-[3px] flex size-4 items-center justify-center rounded-full border border-[#888] bg-[#ddd] text-[11px]">5</span>
        </button>
        <span className="h-10 w-px bg-[#aaa]" />
      </div>
    </footer>
  );
}

export default function App() {
  return (
    <div className="relative flex h-screen flex-col overflow-hidden bg-[#535353] font-['Open_Sans','Noto_Sans',sans-serif] text-[#e4e4e4]">
      <BrowserBar />
      <MenuBar />
      <OptionsBar />
      <div className="flex min-h-0 flex-1">
        <Toolbar />
        <Workspace />
        <RightDock />
      </div>
      <Taskbar />
      <ColorPicker />
    </div>
  );
}
